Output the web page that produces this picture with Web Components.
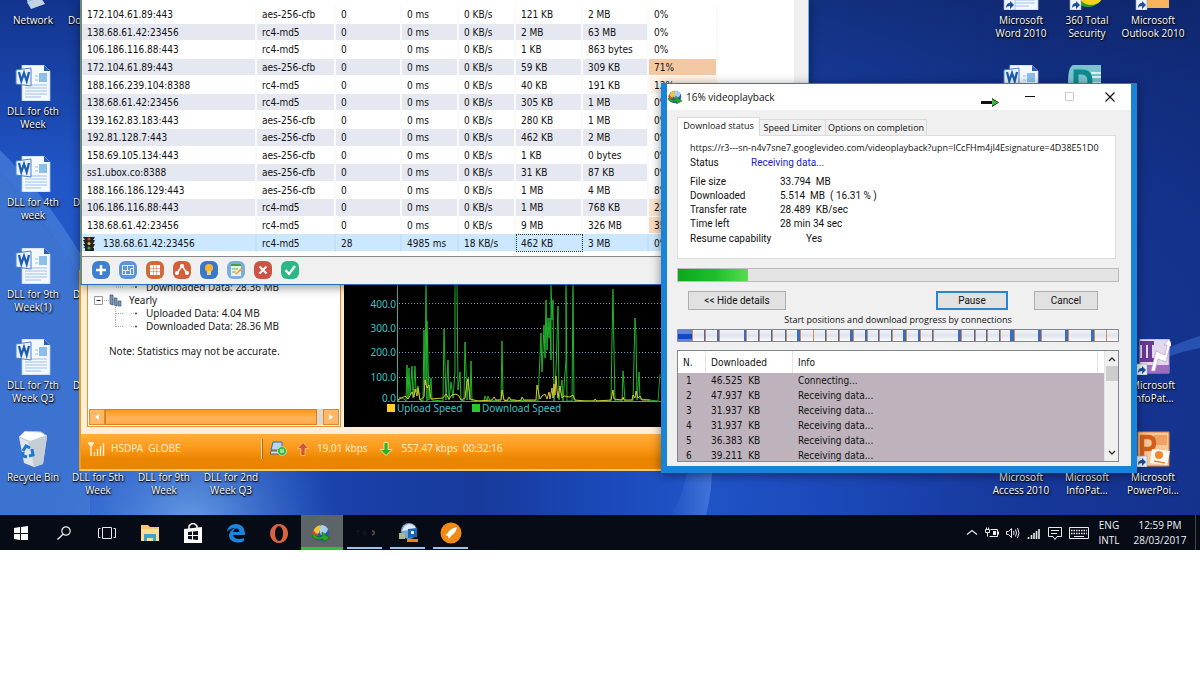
<!DOCTYPE html>
<html lang="en">
<head>
<meta charset="utf-8">
<title>Desktop</title>
<style>
  body { margin: 0; background: #fff; }
</style>
</head>
<body>
<desk-top></desk-top>
<script>
const SANS = '"Open Sans", "Noto Sans", sans-serif';
const TAHOMA = '"DejaVu Sans Condensed", "DejaVu Sans", sans-serif';
const DIALOG = 'Roboto, "Liberation Sans", Arial, sans-serif';
const WIDE = '"Noto Sans", "Open Sans", sans-serif';

function define(name, render, after) {
  customElements.define(name, class extends HTMLElement {
    connectedCallback() {
      if (this.shadowRoot) return;
      const root = this.attachShadow({ mode: 'open' });
      const t = document.createElement('template');
      t.innerHTML = render(this);
      root.append(t.content.cloneNode(true));
      if (after) after(this, root);
    }
  });
}

/* ---------- glyphs ---------- */
const shortcut = '<path d="M1 25h11v11H1z" fill="#eef3fb" stroke="#9ab" stroke-width=".6"/><path d="M3 34q0-5 4-5v-2l4 4-4 4v-3q-3 0-4 2z" fill="#1c4f9c"/>';
const docBody = '<path d="M7 0h22l6 6v30H7z" fill="#f4f9ff" stroke="#a8c4e6" stroke-width=".8"/><path d="M29 0v6h6z" fill="#2a5fb8"/><path d="M20 11h3M20 15h3M10 20h22M10 23h22M10 26h22M10 29h22M10 32h16" stroke="#9cc0e8" stroke-width="1.200"/><path d="M24 8h8v9h-8z" fill="#8cc0ec"/><path d="M1 5l15-2v18L1 19z" fill="#eaf3fd" stroke="#4a80c8"/><path d="M4 7l2.300 9 2.700-8 2.700 8L14 7" fill="none" stroke="#1c5cb4" stroke-width="2.300"/>';
const idm = '<circle cx="9" cy="9" r="8" fill="#2a5cae"/><path d="M9 1a8 8 0 0 1 7 4q-1 5-7 6Q6 6 9 1z" fill="#a8cff4"/><path d="M3 4Q7 0 9 2L7 9 1 13Q0 8 3 4z" fill="#f4c534"/><path d="M2 9q3 6 8 3V8l8 6-7 4v-3Q3 17 0 12z" fill="#2aa52c" stroke="#0b5a18" stroke-width=".6"/><path d="M1 7q2 4 5 4" stroke="#d94428" stroke-width="2" fill="none"/>';
const G = {
  network: [36, '<path d="M8 14l20-6 4 14-18 8z" fill="#7cc4f0" stroke="#dcecf8"/><path d="M12 28l14-4 4 6-14 5z" fill="#c4d4e4"/>'],
  doc: [36, docBody],
  word: [36, docBody + shortcut],
  s360: [36, '<circle cx="19" cy="17" r="16" fill="#2c9e28"/><circle cx="22" cy="18" r="13" fill="#f7d21c"/>' + shortcut],
  outlook: [36, '<path d="M6 2h28v32H6z" fill="#f7b45c"/><path d="M12 14h20v12H12z" fill="#fff3dc"/><path d="M12 14l10 8 10-8M12 26l8-7M32 26l-8-7" fill="none" stroke="#e88a24" stroke-width="1.500"/>' + shortcut],
  publisher: [36, '<path d="M6 0h28v36H6Q1 34 1 18T6 0z" fill="#7cc4cc"/><path d="M22 12h12M22 18h12M24 8h10" stroke="#d8f0f4" stroke-width="2"/><path d="M9 7h6q8 0 8 9t-8 9H9z" fill="none" stroke="#0c8a90" stroke-width="5"/>'],
  infopath: [36, '<path d="M5 0h29v34H5z" fill="#e4d8ee" stroke="#b89cd0"/><path d="M5 26h29v8H5z" fill="#a06cc0"/><path d="M5 4h14M9 4v17M15 4v17M5 21h14" stroke="#6a3a94" stroke-width="4"/><path d="M16 32l5-20 9 4 2-10-3 0 5-6 4 8-3-1-4 16-8-3-3 12z" fill="#fff" stroke="#b090c8" stroke-width=".6"/>' + shortcut],
  ppt: [36, '<path d="M3 1h31v34H3z" fill="#f8c898" stroke="#e0823c"/><path d="M19 4h13v10H19z" fill="#f0a060"/><path d="M7 26V6h6q6 0 6 6t-6 6H7" fill="none" stroke="#d2601c" stroke-width="4.500"/><path d="M17 18l18 2-3 14-17-2z" fill="#fff8f0"/><circle cx="24" cy="24" r="4" fill="#e88838"/><path d="M19 30l11 2" stroke="#e88838" stroke-width="1.500"/>' + shortcut],
  bin: [36, '<path d="M4 6l28-1-4 28-9 3-10-4z" fill="#dfe5ea"/><path d="M4 6l9 4 19-5-6-4-16-1z" fill="#f8fafb" stroke="#b8c2ca"/><path d="M13 10l6 26 9-3 4-28z" fill="#c5ced6"/><path d="M8 4l6-3 5 4 6-3 4 3-14 5z" fill="#fff"/><path d="M8 20l3-5 4 2M17 18l1 6-4 1M12 26l-4-1 0-4" stroke="#1f78d0" stroke-width="3" fill="none"/>'],
  idm: [18, idm],
  win: [14, '<path d="M0 2l6-1v6H0zM7 1l7-1v7H7zM0 8h6v6l-6-1zM7 8h7v7l-7-1z" fill="#fff"/>'],
  search: [14, '<circle cx="9" cy="5" r="4.200" fill="none" stroke="#e8eaee" stroke-width="1.200"/><path d="M6 8.200L.5 13.500" stroke="#e8eaee" stroke-width="1.400"/>'],
  taskview: [18, '<path d="M4.500 3.500h9v11h-9zM2.500 4.500h-2v9h2M15.500 4.500h2v9h-2" fill="none" stroke="#e8eaee"/>'],
  explorer: [20, '<path d="M1 2h7l2 2h9v14H1z" fill="#f6c76c"/><path d="M1 6h18v12H1z" fill="#fbdc94"/><path d="M4 11h12v7h-3v-3H7v3H4z" fill="#3ea2c4"/>'],
  store: [20, '<path d="M1 6l18-2v16H1z" fill="#fff"/><path d="M6 6V3q4-5 8 0v2" fill="none" stroke="#fff" stroke-width="1.500"/><path d="M5 9l4-.5V12H5zM10 8.500l5-.5v4h-5zM5 13h4v3.500L5 16zM10 13h5v4l-5-.5z" fill="#0a1020"/>'],
  edge: [20, '<path d="M1 9Q2 1 10 1t9 9v2H7q1 4 6 4 3 0 5-1v3q-3 2-7 1.500Q3 19 3 12q1-5 6-7-5 0-8 4zM7 9h6.500Q13 5.500 10.500 5.500T7 9z" fill="#1d84dc"/>'],
  opera: [20, '<path fill-rule="evenodd" d="M10 1a9 9.500 0 1 0 .1 0zM10 3q4 1 4 7.500T10 18q-4-1-4-7.500T10 3z" fill="#d9633c"/>'],
  dark: [20, '<path d="M17 8q3 0 2 3l-2 1" stroke="#5a524a" fill="none" stroke-width="1.500"/><path d="M1 8h4M3 8v4M8 9h3v3H8z" stroke="#141a28" fill="none"/>'],
  psiphon: [20, '<circle cx="11" cy="8" r="8" fill="#7aa4d4"/><path d="M4 8q2-7 8-7 5 1 6 5z" fill="#dfeaf4"/><path d="M10 6l9-1v9l-9 1z" fill="#1868b8"/><path d="M13 8h3v3h-3z" fill="#fff"/><path d="M1 10h6v6H1z" fill="#a4b894"/><path d="M9 16h11v3H9z" fill="#ee8420"/>'],
  rocket: [22, '<circle cx="11" cy="11" r="10.500" fill="#f08a12"/><path d="M17 5Q9 7 7 12l-2 1 3 1 1 3 2-3q5-3 6-9z" fill="#fff"/>'],
  up: [12, '<path d="M1 4.500l5-4 5 4" transform="translate(0 3)" fill="none" stroke="#e8eaee" stroke-width="1.200"/>'],
  battery: [14, '<path d="M5.500 3.500h7v7h-8M13.500 5.500v3" fill="none" stroke="#e8eaee"/><path d="M8 5h3v4H8z" fill="#e8eaee"/><path d="M.5 3.500h4v3h-4zM1.500 1.500v2M3.500 1.500v2M2.500 6.500v4" stroke="#e8eaee" fill="none"/>'],
  sound: [14, '<path d="M.5 5.500h2l3-3v9l-3-3h-2z" fill="none" stroke="#e8eaee"/><path d="M7.500 5q1 2 0 4M9.500 3.500q2 3.500 0 7M11.500 2q3 5 0 10" fill="none" stroke="#e8eaee"/>'],
  signal: [14, '<path d="M1.500 13v-2M4.500 13v-4M7 13V7M9.500 13V5M12 13V3" stroke="#e8eaee" stroke-width="1.600"/>'],
  note: [14, '<path d="M.5 1.500h13v9H9l-2 3-2-3H.5zM3 4.500h8M3 7.500h6" fill="none" stroke="#e8eaee"/>'],
  keyboard: [20, '<path d="M.5 4.500h19v11H.5z" fill="none" stroke="#e8eaee"/><path d="M2 7.500h16M2 10.500h16" stroke="#e8eaee" stroke-width="1.500" stroke-dasharray="1.500 1"/><path d="M5 13.500h10" stroke="#e8eaee"/>']
};
define('svg-glyph', el => {
  const [n, body] = G[el.getAttribute('name')];
  const s = el.getAttribute('size') || n;
  return `<style>:host{display:block;flex:none}svg{display:block}</style><svg width="${s}" height="${s}" viewBox="0 0 ${n} ${n}" aria-hidden="true">${body}</svg>`;
});

/* ---------- desktop icon ---------- */
define('desk-icon', el => `
<style>
  :host { display: block; position: absolute; width: 66px; }
  a { display: flex; flex-direction: column; align-items: center; gap: 4px; color: #fff; text-decoration: none;
      font: 10px/13px ${SANS}; text-align: center; text-shadow: 1px 1px 2px #000, 0 1px 1px #000; }
  .pic { height: 36px; }
  :host([align=left]) a { align-items: flex-start; }
</style>
<a href="#"><span class="pic">${el.getAttribute('icon') ? `<svg-glyph name="${el.getAttribute('icon')}"></svg-glyph>` : ''}</span><span><slot></slot></span></a>`);

/* ---------- server list window ---------- */
const servers = `172.104.61.89:443|aes-256-cfb|0|0 ms|0 KB/s|121 KB|2 MB|0%
138.68.61.42:23456|rc4-md5|0|0 ms|0 KB/s|2 MB|63 MB|0%
106.186.116.88:443|rc4-md5|0|0 ms|0 KB/s|1 KB|863 bytes|0%
172.104.61.89:443|aes-256-cfb|0|0 ms|0 KB/s|59 KB|309 KB|71%
188.166.239.104:8388|rc4-md5|0|0 ms|0 KB/s|40 KB|191 KB|12%
138.68.61.42:23456|rc4-md5|0|0 ms|0 KB/s|305 KB|1 MB|0%
139.162.83.183:443|aes-256-cfb|0|0 ms|0 KB/s|280 KB|1 MB|0%
192.81.128.7:443|aes-256-cfb|0|0 ms|0 KB/s|462 KB|2 MB|0%
158.69.105.134:443|aes-256-cfb|0|0 ms|0 KB/s|1 KB|0 bytes|0%
ss1.ubox.co:8388|aes-256-cfb|0|0 ms|0 KB/s|31 KB|87 KB|0%
188.166.186.129:443|aes-256-cfb|0|0 ms|0 KB/s|1 MB|4 MB|8%
106.186.116.88:443|rc4-md5|0|0 ms|0 KB/s|1 MB|768 KB|22%
138.68.61.42:23456|rc4-md5|0|0 ms|0 KB/s|9 MB|326 MB|35%
138.68.61.42:23456|rc4-md5|28|4985 ms|18 KB/s|462 KB|3 MB|0%`.split('\n').map(r => r.split('|'));
const heat = { 3: '#f3c9a4', 4: '#fdf3ea', 11: '#fae4d0', 12: '#f8dcc2' };
const tools = [
  ['Add', '#3f7fd0', '<path d="M9 4v10M4 9h10" stroke="#fff" stroke-width="2.500"/>'],
  ['Scan', '#5b95d8', '<path d="M3.500 4.500h11v9h-11zM8.500 4.500v5M3.500 9.500h7M6.500 9.500v4M11.500 7.500h3M11.500 7.500v6" fill="none" stroke="#e4f0fc"/>'],
  ['Grid', '#d2693c', '<path d="M4 4h3v3H4zM7.500 4h3v3h-3zM11 4h3v3h-3zM4 7.500h3v3H4zM7.500 7.500h3v3h-3zM11 7.500h3v3h-3zM4 11h3v3H4zM7.500 11h3v3h-3zM11 11h3v3h-3z" fill="#fff"/>'],
  ['Share', '#d2603c', '<path d="M4 12L9 5l5 7" fill="none" stroke="#fff" stroke-width="1.500"/><circle cx="4" cy="12" r="2" fill="#fff"/><circle cx="9" cy="5" r="2" fill="#fff"/><circle cx="14" cy="12" r="2" fill="#fff"/>'],
  ['Hint', '#3a78cc', '<circle cx="9" cy="7" r="4" fill="#f9b62c"/><path d="M7 10h4v4H7z" fill="#f0d080"/>'],
  ['Edit', '#7aaee0', '<path d="M4 3h10v12H4z" fill="#e8f4e0"/><path d="M4 3h10v2H4z" fill="#48a048"/><path d="M5 8h6M5 11h4" stroke="#78a868"/><path d="M8 13l6-6 1.500 1.500-6 5z" fill="#f0a030"/>'],
  ['Delete', '#cc5444', '<path d="M5.500 5.500l7 7M12.500 5.500l-7 7" stroke="#fff" stroke-width="2"/>'],
  ['Apply', '#2cb884', '<path d="M4.500 9l3.500 4 6-8" fill="none" stroke="#fff" stroke-width="2.200"/>']
];
define('server-window', () => `
<style>
  :host { display: flex; flex-direction: column; background: #f0f0f0; border: solid #6f8a6c; border-width: 0 0 0 2px; border-bottom: 1px solid #2a6cc0; border-right: 1px solid #6cb4ec;
          font: 10px/15px ${TAHOMA}; color: #111; box-sizing: border-box; box-shadow: 0 2px 10px rgba(0,0,0,.45); }
  .view { display: flex; background: #fff; border-bottom: 1px solid #888; padding-bottom: 4px; }
  .view table { margin-top: 6px; }
  table { table-layout: fixed; width: 636px; height: 246px; border-collapse: separate; border-spacing: 0; flex: none; }
  td { padding: 1px 0 0 5px; border-right: 2px solid #fafafa; border-bottom: 1px solid #fff; white-space: nowrap; overflow: hidden; }
  tr:nth-child(even) td { background: #e5e8f0; }
  tr:last-child td { background: #cce8ff; border-right: 2px solid #c2e0f6; }
  tr:last-child td.focus { outline: 1px dotted #333; outline-offset: -1px; }
  tr:last-child td.first { padding-left: 0; }
  .srv { display: flex; align-items: center; gap: 8px; padding-left: 1px; }
  .view i { margin-left: auto; width: 14px; margin-block: 0 -4px; background: #f0f0f0; }
  .bar { display: flex; gap: 9px; height: 27px; align-items: center; padding: 0 0 2px 10px; box-sizing: border-box; }
  button { width: 18px; height: 18px; padding: 0; border: 0; border-radius: 6px; box-shadow: 0 0 2px #fff; }
  svg { display: block; }
</style>
<div class="view"><table>
<colgroup><col style="width:175px"><col style="width:79px"><col style="width:66px"><col style="width:57px"><col style="width:57px"><col style="width:67px"><col style="width:66px"><col></colgroup>
${servers.map((r, i) => '<tr>' + r.map((c, j) => {
  const bg = j === 7 ? ` style="background:${heat[i] || (i === 13 ? '#cce8ff' : '#fff')}"` : '';
  const last = i === 13;
  const body = last && j === 0 ? `<span class="srv"><svg width="12" height="15" viewBox="0 0 12 15"><path d="M0 1h12l-2 3h2l-2 4h2l-2 4h1v3H2v-3H0l2-1-2-3h2L0 4h2z" fill="#222"/><circle cx="6" cy="3" r="1.500" fill="#e04030"/><circle cx="6" cy="7.500" r="1.500" fill="#e8c040"/><circle cx="6" cy="12" r="1.500" fill="#30b040"/></svg>${c}</span>` : c;
  return `<td${bg}${last && j === 5 ? ' class="focus"' : ''}${last && j === 0 ? ' class="first"' : ''}>${body}</td>`;
}).join('') + '</tr>').join('')}
</table><i></i></div>
<div class="bar">${tools.map(([n, c, p]) => `<button aria-label="${n}" style="background:${c}"><svg width="18" height="18" viewBox="0 0 18 18">${p}</svg></button>`).join('')}</div>`);

/* ---------- traffic chart ---------- */
const down = '398,401 400,397 404,399 406,401 407,365 408,398 409,368 410,395 412,366 413,398 415,366 416,392 418,386 420,400 423,401 424,330 425,385 426,285 427,401 427,321 429,400 431,378 432,400 443,401 444,329 446,400 448,360 449,400 451,382 453,398 455,372 455,285 457,285 458,390 460,372 461,400 464,401 465,342 467,400 468,378 470,400 471,361 472,401 484,401 485,396 487,401 488,396 490,401 501,400 502,341 503,396 504,400 538,401 541,333 542,372 544,325 545,358 546,300 547,350 548,318 549,338 550,318 551,360 551,285 552,320 553,300 554,401 556,370 558,306 559,400 562,380 563,401 566,360 566,285 567,401 572,401 573,285 574,400 576,401 611,401 612,340 613,289 614,350 615,401 622,401 623,371 625,401 633,401 635,318 636,336 637,400 639,372 640,399 658,401 660,374';
const up = '398,400 405,396 408,399 412,392 414,397 415,389 417,396 418,388 420,400 424,397 425,380 427,388 429,385 431,399 443,398 446,394 449,399 452,395 456,394 459,396 461,400 465,398 467,382 468,379 470,399 478,401 492,400 494,397 496,400 501,400 502,390 504,400 507,401 509,397 511,400 515,400 517,401 521,400 522,397 524,400 536,400 537,385 540,399 542,396 545,394 547,399 549,392 550,399 552,388 553,398 554,384 555,395 556,376 557,390 558,398 560,386 562,398 564,396 570,397 573,395 575,400 585,401 594,401 595,399 597,401 611,400 613,390 614,399 622,400 623,397 624,400 632,400 633,395 635,398 636,391 638,398 640,396 642,400 650,400';
define('traffic-chart', () => `
<style>
  :host { display: block; background: #000; }
  svg { display: block; font: 10px ${WIDE}; }
</style>
<svg width="318" height="157" viewBox="344 270 318 157" shape-rendering="crispEdges">
  <path d="M399 303.500h262M399 328.500h262M399 352.500h262M399 377.500h262" stroke="#6c9cc0" stroke-dasharray="1 2"/>
  <g fill="none" shape-rendering="auto"><polyline points="${down}" stroke="#22b52e"/><polyline points="${up}" stroke="#d8c832"/></g>
  <path d="M397.500 270v131.500H661" fill="none" stroke="#38b0a8"/>
  <path d="M398 401.500h263" stroke="#2cc040" stroke-dasharray="5 2"/>
  <g fill="#3cc4c4" text-anchor="end"><text x="396" y="308">400.0</text><text x="396" y="332">300.0</text><text x="396" y="356">200.0</text><text x="396" y="381">100.0</text><text x="396" y="402">0.0</text></g>
  <path d="M387 404h8v8h-8z" fill="#ffd020"/><path d="M472 404h8v8h-8z" fill="#22c82c"/>
  <g fill="#3cc4c4"><text x="397" y="412">Upload Speed</text><text x="482" y="412">Download Speed</text></g>
</svg>`);

/* ---------- modem statistics window ---------- */
define('modem-window', () => `
<style>
  :host { display: flex; flex-direction: column; box-sizing: border-box; border: 2px solid #e8a020; border-top: 0; border-bottom-color: #f8c860; background: #ffefd8; font: 10px/13px ${WIDE}; }
  .main { display: flex; gap: 3px; padding: 0 0 7px 6px; }
  .tree { box-sizing: border-box; width: 254px; height: 157px; border: 1px solid #e89030; border-top: 0; background: #fff; display: flex; flex-direction: column; color: #222; }
  ul { list-style: none; margin: 0; padding: 11px 0 0; }
  li { display: flex; align-items: center; height: 13px; padding-left: 27px; white-space: nowrap; }
  li.top { padding-left: 6px; gap: 6px; }
  p { margin: 12px 0 0 21px; }
  .scroll { margin-top: auto; display: flex; height: 16px; padding: 0 1px 1px; }
  .scroll button { width: 16px; padding: 0; border: 1px solid #e08830; background: #ffb868; display: flex; align-items: center; justify-content: center; }
  .thumb { flex: 1; border: 1px solid #e07c18; background: linear-gradient(#f8981c, #ffb45c 60%, #ffa840); margin-right: 6px; box-shadow: 6px 0 0 #dcd8d4; }
  .status { display: flex; align-items: center; height: 35px; box-sizing: border-box; background: linear-gradient(#ffae3c, #f99716 45%, #ea8600 70%, #e88400); color: #ffedc8; white-space: pre; padding: 0 0 6px 7px; }
  .status svg { display: block; flex: none; }
  .net { flex: none; width: 150px; margin-left: 6px; }
  .sep { width: 1px; height: 20px; background: #ffe8c0; box-shadow: 1px 0 #b06a10; margin-right: 8px; }
</style>
<div class="main">
  <div class="tree">
    <ul>
      <li><svg width="31" height="13"><path d="M1 6h8M16 6h5" stroke="#aaa" stroke-dasharray="1 1"/><circle cx="21" cy="6" r="1" fill="#444"/></svg>Downloaded Data: 28.36 MB</li>
      <li class="top"><svg width="29" height="13"><path d="M.5 2.500h8v8h-8z" fill="#fff" stroke="#999"/><path d="M2.500 6.500h4" stroke="#222"/><path d="M10 6.500h5" stroke="#aaa" stroke-dasharray="1 1"/><path d="M16 1h3v10l-3-1zM20 4h3v8l-3-1zM24 7h3v5h-3z" fill="#7c98b8" stroke="#3a5474" stroke-width=".7"/></svg>Yearly</li>
      <li><svg width="31" height="13"><path d="M.5 0v13M1 6.500h8M16 6.500h5" stroke="#aaa" stroke-dasharray="1 1"/><circle cx="21" cy="6.500" r="1" fill="#444"/></svg>Uploaded Data: 4.04 MB</li>
      <li><svg width="31" height="13"><path d="M.5 0v7M1 6.500h8M16 6.500h5" stroke="#aaa" stroke-dasharray="1 1"/><circle cx="21" cy="6.500" r="1" fill="#444"/></svg>Downloaded Data: 28.36 MB</li>
    </ul>
    <p>Note: Statistics may not be accurate.</p>
    <div class="scroll"><button aria-label="Scroll left"><svg width="4" height="6"><path d="M4 0v6L0 3z" fill="#fff"/></svg></button><div class="thumb"></div><button aria-label="Scroll right"><svg width="4" height="6"><path d="M0 0v6l4-3z" fill="#fff"/></svg></button></div>
  </div>
  <traffic-chart></traffic-chart>
</div>
<div class="status">
  <svg width="17" height="14" viewBox="0 0 17 14"><path d="M0 1h6M3 1v13M1 1l2 4 2-4M6.500 14v-4M9.500 14V7M12.500 14V4M15.500 14V1" stroke="#fff3d8" fill="none" stroke-width="1.400"/></svg><span class="net">HSDPA  GLOBE</span><span class="sep"></span><svg width="17" height="15" viewBox="0 0 17 15"><path d="M3 1h9v8H1z" fill="#b8d4f0" stroke="#3868a0"/><path d="M1 10h10v3H0z" fill="#d8e0e8" stroke="#567"/><circle cx="12" cy="10" r="4.500" fill="#38b838" stroke="#e4f8d8" stroke-width=".6"/><path d="M10 9h4M10 11h4" stroke="#fff"/></svg><svg width="30" height="14" viewBox="0 0 30 14"><path d="M16 .500l5.500 6H18v7h-4v-7h-3.500z" fill="#d05438" stroke="#ffd8a0" stroke-width=".6"/></svg>19.01 kbps<svg width="34" height="14" viewBox="0 0 34 14"><path d="M18 13.500l6-6H20v-7h-4v7H12z" fill="#28b428" stroke="#fff0c0" stroke-width=".8"/></svg>557.47 kbps  00:32:16</div>`);

/* ---------- download dialog ---------- */
const marks = [[704,1],[717,2],[744,2],[758,1],[771,1],[785,1],[797,3],[813,0],[825,1],[838,1],[850,3],[865,2],[878,1],[891,1],[903,3],[918,2],[932,1],[958,3],[974,1],[986,1],[999,1],[1010,4],[1038,3],[1065,3],[1091,3],[1106,0]];
const parts = [['46.525', 'Connecting...'], ['47.937', 'Receiving data...'], ['31.937', 'Receiving data...'], ['31.937', 'Receiving data...'], ['36.383', 'Receiving data...'], ['39.211', 'Receiving data...']];
define('download-dialog', () => `
<style>
  :host { display: flex; flex-direction: column; box-sizing: border-box; background: #f0f0f0; border: solid #1883d7; border-width: 1px 6px 7px; font: 10px/14px ${DIALOG}; color: #111; box-shadow: 0 2px 10px rgba(0,0,0,.45); }
  header { display: flex; align-items: center; height: 26px; background: #fff; padding: 0 16px 0 1px; box-sizing: border-box; }
  h1 { font: 10px/14px ${SANS}; margin: 0 auto 0 4px; }
  header button { border: 0; background: none; padding: 0; width: 10px; height: 10px; margin-left: 30px; }
  header svg, .sb svg { display: block; }
  .arrow { margin: 10px -4px 0 0; }
  .body { padding: 7px 12px 4px 10px; }
  .tabs { display: flex; align-items: flex-end; height: 18px; }
  .tabs button, .url, .cap { font: 9px/14px ${SANS}; }
  .tabs button { padding: 0; height: 16px; border: 1px solid #dadada; border-width: 1px 1px 0 0; background: #f0f0f0; white-space: nowrap; color: inherit; width: 66px; }
  .tabs button.on { height: 19px; width: 83px; background: #fff; border-left-width: 1px; margin-bottom: -1px; padding: 0 0 2px; }
  .tabs button.wide { width: 101px; }
  .panel { background: #fff; border: 1px solid #dcdcdc; margin-right: 3px; height: 124px; box-sizing: border-box; padding: 5px 0 0 12px; white-space: pre; overflow: hidden; }
  dl { margin: 0; display: grid; grid-template-columns: 90px 1fr; }
  dt, dd { margin: 0; }
  .st { grid-template-columns: 61px 1fr; margin: 1px 0 5px; }
  .st dd { color: #2222cc; }
  .re { margin-top: 1px; grid-template-columns: 116px 1fr; }
  progress { display: block; appearance: none; width: 100%; height: 14px; margin-top: 9px; box-sizing: border-box; border: 1px solid #bcbcbc; }
  progress::-webkit-progress-bar { background: #e4e4e4; }
  progress::-webkit-progress-value { background: linear-gradient(90deg, #0ca81c, #1fc02c 55%, #58dc50); }
  .btns { display: flex; margin-top: 9px; padding: 0 21px 0 11px; gap: 26px; }
  .btns button { font: inherit; height: 19px; padding: 0; box-sizing: border-box; border: 1px solid #adadad; background: #e1e1e1; color: #111; width: 64px; }
  .btns .hide { width: 98px; margin-right: auto; }
  .btns .pause { width: 72px; border: 2px solid #2a84d4; }
  .cap { text-align: center; margin: 3px 0 2px; }
  .segs { display: block; width: 100%; height: 13px; }
  .list { display: flex; height: 112px; box-sizing: border-box; border: 1px solid #82878f; margin-top: 8px; overflow: hidden; background: #beb3bd; font: 10px/15px ${TAHOMA}; }
  table { border-spacing: 0; table-layout: fixed; flex: 1; width: 0; height: 112px; }
  th { background: #fff; font-weight: normal; text-align: left; height: 22px; border-right: 1px solid #e4e4e4; }
  th:last-child { border-right: 0; }
  td { height: 15px; }
  th, td { padding: 0 0 0 5px; box-sizing: border-box; white-space: pre; }
  td:first-child { padding-left: 8px; }
  .sb { width: 14px; background: #f0f0f0; display: flex; flex-direction: column; align-items: center; padding: 5px 0; box-sizing: border-box; border-left: 1px solid #e4e4e4; }
  .sb i { width: 12px; height: 15px; background: #cdcdcd; margin: 4px 0 auto; }
</style>
<header><svg-glyph name="idm" size="14"></svg-glyph><h1>16% videoplayback</h1>
  <svg class="arrow" width="18" height="9" viewBox="0 0 18 9"><path d="M0 3h11V0l7 4.500L11 9V6H0z" fill="#111"/><path d="M11 1l6 3.500L11 8z" fill="#38c038"/></svg>
  <button aria-label="Minimize"><svg width="10" height="10"><path d="M0 4.500h10" stroke="#111"/></svg></button>
  <button aria-label="Maximize" disabled><svg width="10" height="10"><path d="M.5 .500h8v8h-8z" fill="none" stroke="#ccc"/></svg></button>
  <button aria-label="Close"><svg width="10" height="10"><path d="M.5 .500l9 9M9.500 .500l-9 9" stroke="#111" stroke-width="1.200"/></svg></button>
</header>
<div class="body">
  <div class="tabs" role="tablist"><button role="tab" class="on">Download status</button><button role="tab">Speed Limiter</button><button role="tab" class="wide">Options on completion</button></div>
  <div class="panel"><div class="url">https://r3---sn-n4v7sne7.googlevideo.com/videoplayback?upn=lCcFHm4jI4Esignature=4D38E51D0</div><dl class="st"><dt>Status</dt><dd>Receiving data...</dd></dl><dl><dt>File size</dt><dd>33.794  MB</dd><dt>Downloaded</dt><dd>5.514  MB  ( 16.31 % )</dd><dt>Transfer rate</dt><dd>28.489  KB/sec</dd><dt>Time left</dt><dd>28 min 34 sec</dd></dl><dl class="re"><dt>Resume capability</dt><dd>Yes</dd></dl></div>
  <progress value="16" max="100" aria-label="Download progress"></progress>
  <div class="btns"><button class="hide">&lt;&lt; Hide details</button><button class="pause">Pause</button><button>Cancel</button></div>
  <div class="cap">Start positions and download progress by connections</div>
  <svg class="segs" viewBox="677 0 442 13" preserveAspectRatio="none">
    <defs><linearGradient id="g" x2="0" y2="1"><stop stop-color="#f4f6fa"/><stop offset=".5" stop-color="#dfe5ee"/><stop offset="1" stop-color="#fff"/></linearGradient></defs>
    <path d="M677 0h442v13H677z" fill="url(#g)"/><path d="M678 1h14v11h-14z" fill="#6484d8"/><path d="M678 5h14v5h-14z" fill="#0c4cc0"/><path d="M692 1h1v11h-1z" fill="#d88850"/>
    ${marks.map(([x, w]) => `<path d="M${x} 1h${w}v11h-${w}z" fill="#3a6cbc"/><path d="M${x + w} 1h1v11h-1z" fill="#d88850"/>`).join('')}
    <path d="M677.500 .500h441v12h-441z" fill="none" stroke="#82878f"/>
  </svg>
  <div class="list"><table><colgroup><col style="width:28px"><col style="width:87px"><col><col style="width:6px"></colgroup>
    <tr><th>N.</th><th>Downloaded</th><th>Info</th><th></th></tr>
    ${parts.map(([a, b], i) => `<tr><td>${i + 1}</td><td>${a}  KB</td><td>${b}</td><td></td></tr>`).join('')}
  </table><div class="sb"><svg width="8" height="6"><path d="M1 5l3-3 3 3" fill="none" stroke="#333" stroke-width="1.400"/></svg><i></i><svg width="8" height="6"><path d="M1 1l3 3 3-3" fill="none" stroke="#333" stroke-width="1.400"/></svg></div></div>
</div>`);

/* ---------- taskbar ---------- */
define('task-bar', () => `
<style>
  :host { display: flex; height: 35px; background: #060b16; color: #f0f2f6; font: 10px/15px ${SANS}; text-align: center; }
  button { width: 43px; padding: 0 2px 0 0; border: 0; background: none; display: flex; align-items: center; justify-content: center; position: relative; }
  .run::after { content: ""; position: absolute; left: 3px; right: 5px; bottom: 1px; height: 2px; background: #9cc4ec; }
  .active { background: #5c6468; box-shadow: inset 0 -3px #30c030; width: 42px; margin-right: 1px; }
  .tray { margin-left: auto; display: flex; align-items: center; gap: 7px; }
  .lang { width: 26px; }
  .clock { width: 60px; margin-left: 1px; }
  .edge { width: 4px; align-self: stretch; border-left: 1px solid #4a4440; margin-left: -2px; }
</style>
${[['Start','win'],['Search','search'],['Task view','taskview'],['File Explorer','explorer'],['Store','store'],['Edge','edge'],['Opera','opera'],['Internet Download Manager','idm','active'],['Terminal','dark','run'],['Psiphon','psiphon','run'],['Rocket','rocket','run']].map(([l, g, c]) => `<button aria-label="${l}" class="${c || ''}"><svg-glyph name="${g}"></svg-glyph></button>`).join('')}
<div class="tray">${['up','battery','sound','signal','note','keyboard'].map(g => `<svg-glyph name="${g}"></svg-glyph>`).join('')}
<div class="lang">ENG<br>INTL</div><div class="clock">12:59 PM<br>28/03/2017</div><span class="edge"></span></div>`);

/* ---------- desktop ---------- */
const L = (y, icon, label, x = 0) => `<desk-icon icon="${icon}" style="left:${x}px;top:${y}px">${label}</desk-icon>`;
const R = (y, icon, label, r) => `<desk-icon icon="${icon}" style="right:${r}px;top:${y}px">${label}</desk-icon>`;
define('desk-top', () => `
<style>
  :host { display: block; overflow: hidden; }
  main { position: relative; height: 515px; overflow: hidden; background: #1a43ae; }
  .wall { position: absolute; inset: 0; width: 100%; height: 100%; }
  server-window { position: absolute; left: 80px; top: 0; width: 729px; }
  modem-window { position: absolute; left: 79px; top: 270px; width: 586px; }
  download-dialog { position: absolute; left: 661px; top: 83px; width: 476px; }
</style>
<main>
<svg class="wall" viewBox="0 0 1200 515" preserveAspectRatio="none" aria-hidden="true">
  <defs>
    <linearGradient id="a" x2="0" y2="1"><stop stop-color="#12348e"/><stop offset=".35" stop-color="#2156c8"/><stop offset="1" stop-color="#2a60cc"/></linearGradient>
    <linearGradient id="b"><stop stop-color="#1a44a8" stop-opacity="0"/><stop offset=".1" stop-color="#1a44a8" stop-opacity="0"/><stop offset=".27" stop-color="#1a42ac"/><stop offset=".4" stop-color="#173a9c"/><stop offset=".5" stop-color="#1b48b8"/><stop offset=".58" stop-color="#2054c8"/><stop offset=".7" stop-color="#1c48b8"/><stop offset=".85" stop-color="#16389a"/><stop offset="1" stop-color="#14328c"/></linearGradient>
    <linearGradient id="c" x2="0" y2="1"><stop stop-color="#0c1f58" stop-opacity=".6"/><stop offset=".4" stop-color="#0f2a78" stop-opacity=".2"/><stop offset="1" stop-color="#1c48b0" stop-opacity="0"/></linearGradient>
    <radialGradient id="d" cx="190" cy="530" r="150" gradientUnits="userSpaceOnUse"><stop stop-color="#6aa0e4"/><stop offset="1" stop-color="#3f74d4" stop-opacity="0"/></radialGradient>
    <linearGradient id="e"><stop stop-color="#4a7cdc" stop-opacity="0"/><stop offset="1" stop-color="#4a7cdc" stop-opacity=".8"/></linearGradient>
  </defs>
  <path d="M0 0h1200v515H0z" fill="url(#a)"/>
  <path d="M0 172Q50 225 90 292V515H0z" fill="#3c72d0"/>
  <path d="M0 172Q50 225 90 292V270Q50 200 0 150z" fill="#5088dc" opacity=".6"/>
  <path d="M0 0h1200v515H0z" fill="url(#b)"/>
  <path d="M0 0h1200v515H0z" fill="url(#d)"/>
  <path d="M670 515q14-18 18-50h24q0 28-6 50z" fill="url(#e)"/>
  <path d="M800 0h400v515H800z" fill="url(#c)"/>
  <path d="M1137 366q34-22 63-30v12q-34 6-63 24z" fill="#3468cc" opacity=".6"/>
</svg>
${L(-26, 'network', 'Network')}${L(65, 'doc', 'DLL for 6th<br>Week')}${L(156, 'doc', 'DLL for 4th<br>week')}${L(248, 'doc', 'DLL for 9th<br>Week(1)')}${L(339, 'doc', 'DLL for 7th<br>Week Q3')}${L(431, 'bin', 'Recycle Bin')}
<desk-icon align="left" style="left:68px;top:-26px">Do</desk-icon><desk-icon align="left" style="left:73px;top:156px">D</desk-icon><desk-icon align="left" style="left:73px;top:248px">D</desk-icon><desk-icon align="left" style="left:73px;top:339px">D</desk-icon>
${L(431, 'doc', 'DLL for 5th<br>Week', 65)}${L(431, 'doc', 'DLL for 9th<br>Week', 131)}${L(431, 'doc', 'DLL for 2nd<br>Week Q3', 198)}
${R(-26, 'word', 'Microsoft<br>Word 2010', 146)}${R(-26, 's360', '360 Total<br>Security', 80)}${R(-26, 'outlook', 'Microsoft<br>Outlook 2010', 14)}
${R(65, 'doc', '', 146)}${R(65, 'publisher', '', 82)}
${R(339, 'infopath', 'Microsoft<br>InfoPat...', 14)}
${R(431, 'doc', 'Microsoft<br>Access 2010', 146)}${R(431, 'infopath', 'Microsoft<br>InfoPat...', 80)}${R(431, 'ppt', 'Microsoft<br>PowerPoi...', 14)}
<modem-window></modem-window>
<server-window></server-window>
<download-dialog></download-dialog>
</main>
<task-bar></task-bar>`);
</script>
</body>
</html>
